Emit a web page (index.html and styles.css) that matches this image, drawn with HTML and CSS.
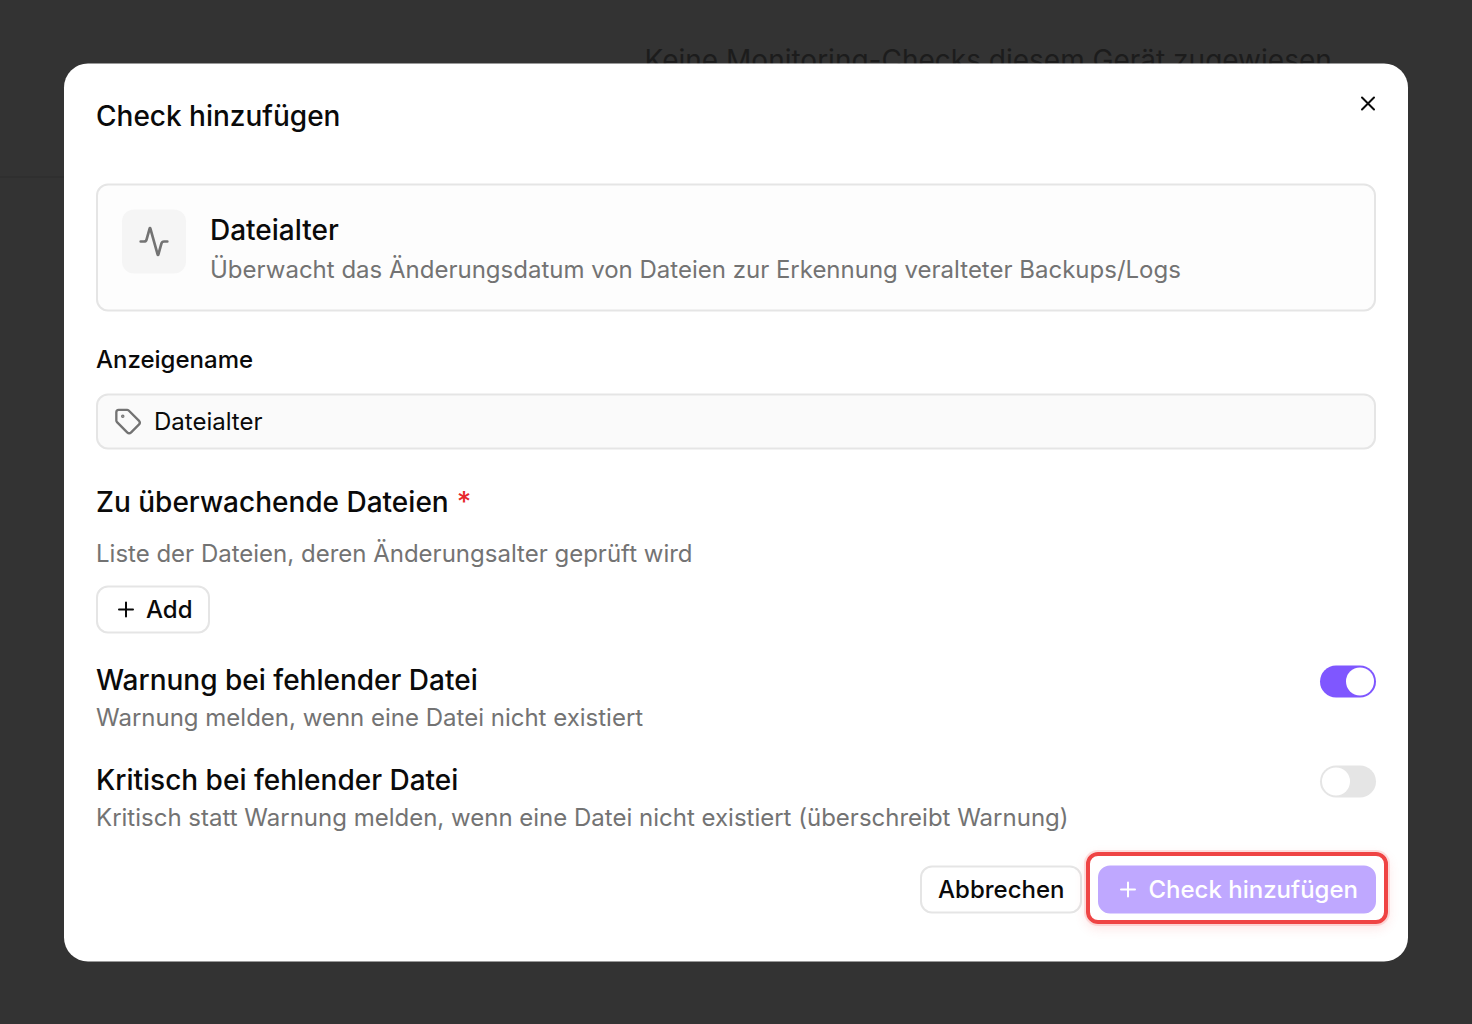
FILE: index.html
```html
<!DOCTYPE html>
<html lang="de">
<head>
  <meta charset="UTF-8">
  <title>Check hinzufügen</title>
  <link rel="stylesheet" href="styles.css">
</head>
<body>
  <div class="page">
    <p class="empty-text">Keine Monitoring-Checks diesem Gerät zugewiesen</p>
  </div>

  <div class="overlay">
    <div class="modal" role="dialog" aria-labelledby="modal-title">
      <button class="close" aria-label="Schließen">
        <svg class="icon" width="24" height="24" viewBox="0 0 24 24"><path d="M18 6 6 18M6 6l12 12"/></svg>
      </button>

      <h2 class="modal-title" id="modal-title">Check hinzufügen</h2>

      <div class="check-card">
        <div class="check-icon">
          <svg class="icon" width="32" height="32" viewBox="0 0 24 24"><path d="M22 12h-2.48a2 2 0 0 0-1.93 1.46l-2.35 8.36a.25.25 0 0 1-.48 0L9.24 2.18a.25.25 0 0 0-.48 0l-2.35 8.36A2 2 0 0 1 4.49 12H2"/></svg>
        </div>
        <div>
          <h3 class="heading">Dateialter</h3>
          <p class="hint card-hint">Überwacht das Änderungsdatum von Dateien zur Erkennung veralteter Backups/Logs</p>
        </div>
      </div>

      <label class="label" for="name">Anzeigename</label>
      <div class="field">
        <svg class="icon" width="28" height="28" viewBox="0 0 24 24"><path d="M12.586 2.586A2 2 0 0 0 11.172 2H4a2 2 0 0 0-2 2v7.172a2 2 0 0 0 .586 1.414l8.704 8.704a2.426 2.426 0 0 0 3.42 0l6.58-6.58a2.426 2.426 0 0 0 0-3.42z"/><circle class="dot" cx="7.5" cy="7.5" r=".5"/></svg>
        <input type="text" id="name" value="Dateialter">
      </div>

      <div class="files">
        <h3 class="heading">Zu überwachende Dateien <span class="required">*</span></h3>
        <p class="hint">Liste der Dateien, deren Änderungsalter geprüft wird</p>
        <button class="btn add">
          <svg class="icon" width="24" height="24" viewBox="0 0 24 24"><path d="M5 12h14M12 5v14"/></svg>
          <span class="btn-text">Add</span>
        </button>
      </div>

      <div class="option">
        <div>
          <h3 class="heading">Warnung bei fehlender Datei</h3>
          <p class="hint">Warnung melden, wenn eine Datei nicht existiert</p>
        </div>
        <button class="switch on" role="switch" aria-checked="true"><span class="thumb"></span></button>
      </div>

      <div class="option">
        <div>
          <h3 class="heading">Kritisch bei fehlender Datei</h3>
          <p class="hint">Kritisch statt Warnung melden, wenn eine Datei nicht existiert (überschreibt Warnung)</p>
        </div>
        <button class="switch" role="switch" aria-checked="false"><span class="thumb"></span></button>
      </div>

      <div class="footer">
        <button class="btn"><span class="btn-text">Abbrechen</span></button>
        <div class="highlight">
          <button class="btn primary" disabled>
            <svg class="icon" width="24" height="24" viewBox="0 0 24 24"><path d="M5 12h14M12 5v14"/></svg>
            <span class="btn-text">Check hinzufügen</span>
          </button>
        </div>
      </div>
    </div>
  </div>
</body>
</html>
```
FILE: styles.css
```css
* {
  box-sizing: border-box;
}

body {
  margin: 0;
  height: 1024px;
  overflow: hidden;
  background: #333;
  color: #0a0a0a;
  font-family: Inter, "Liberation Sans", sans-serif;
}

h2, h3, p {
  margin: 0;
}

.page {
  width: 1400px;
  height: 178px;
  padding-top: 40px;
  border-bottom: 2px solid #2f2f2f;
}

.empty-text {
  margin-left: 644.5px;
  font-size: 28px;
  line-height: 40px;
  color: #1c1c1c;
  white-space: nowrap;
}

.overlay {
  position: absolute;
  inset: 0;
  padding: 64px;
}

.modal {
  position: relative;
  height: 898px;
  padding: 32px;
  background: #fff;
  border-radius: 24px;
  transform: translateY(-0.5px);
}

.icon {
  display: block;
  flex: none;
  fill: none;
  stroke: currentColor;
  stroke-width: 2;
  stroke-linecap: round;
  stroke-linejoin: round;
}

.icon .dot {
  fill: currentColor;
}

.close {
  position: absolute;
  top: 28px;
  right: 28px;
  padding: 0;
  border: none;
  background: none;
  color: #0a0a0a;
}

.modal-title,
.heading {
  font-size: 28px;
  line-height: 40px;
  font-weight: 500;
}

.hint {
  font-size: 24px;
  line-height: 32px;
  color: #737373;
}

.check-card {
  display: flex;
  gap: 24px;
  margin-top: 48px;
  padding: 24px;
  border: 2px solid #e5e5e5;
  border-radius: 12px;
  background: #fdfdfd;
}

.check-icon {
  display: flex;
  align-items: center;
  justify-content: center;
  width: 64px;
  height: 64px;
  border-radius: 12px;
  background: #f5f5f5;
  color: #737373;
}

.card-hint {
  margin-top: 4px;
}

.label {
  display: block;
  margin: 32px 0 18px;
  font-size: 24px;
  line-height: 32px;
  font-weight: 500;
}

.field {
  display: flex;
  align-items: center;
  gap: 12px;
  height: 56px;
  padding: 0 16px;
  border: 2px solid #e5e5e5;
  border-radius: 12px;
  background: #fafafa;
  color: #737373;
}

.field input {
  flex: 1;
  padding: 0 0 2px;
  border: none;
  outline: none;
  background: none;
  font: inherit;
  font-size: 24px;
  color: #0a0a0a;
}

.files {
  display: flex;
  flex-direction: column;
  align-items: flex-start;
  gap: 16px;
  margin: 32px 0 26px;
}

.required {
  margin-left: 0.5px;
  color: #e7272d;
}

.btn {
  display: flex;
  align-items: center;
  gap: 8px;
  height: 48px;
  padding: 0 16px;
  border: 2px solid #e5e5e5;
  border-radius: 12px;
  background: #fff;
  color: #0a0a0a;
  font: inherit;
  font-size: 24px;
  font-weight: 500;
  white-space: nowrap;
}

.btn-text {
  padding-bottom: 2px;
}

.btn.add {
  width: 114px;
}

.btn.primary {
  border-color: #bfa8ff;
  background: #bfa8ff;
  color: #fff;
}

.option {
  display: flex;
  justify-content: space-between;
  height: 74px;
  margin-bottom: 26px;
}

.option .hint {
  margin-top: 2px;
}

.switch {
  display: flex;
  width: 56px;
  height: 32px;
  margin-top: 6px;
  padding: 2px;
  border: none;
  border-radius: 16px;
  background: #e5e5e5;
}

.switch.on {
  justify-content: flex-end;
  background: #7f57ff;
}

.thumb {
  width: 28px;
  height: 28px;
  border-radius: 50%;
  background: #fff;
}

.footer {
  display: flex;
  justify-content: flex-end;
  gap: 16px;
  margin-top: 32px;
}

.highlight {
  position: relative;
}

/* red frame around the submit button */
.highlight::after {
  content: "";
  position: absolute;
  inset: -14px -12px -10px;
  border: 4px solid #ef4444;
  border-radius: 12px;
  box-shadow: 0 0 0 2px rgba(239, 68, 68, 0.15), 0 4px 12px rgba(239, 68, 68, 0.15);
  transform: translateY(0.5px);
  pointer-events: none;
}
```
